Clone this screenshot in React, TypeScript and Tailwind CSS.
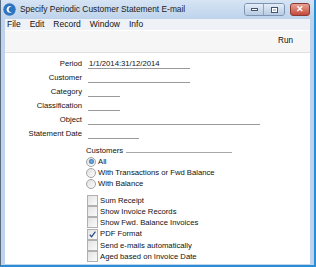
import React from "react";

const fields = [
  { label: "Period", width: "w-[102px]", value: "1/1/2014:31/12/2014" },
  { label: "Customer", width: "w-[102px]", value: "" },
  { label: "Category", width: "w-[32px]", value: "" },
  { label: "Classification", width: "w-[32px]", value: "" },
  { label: "Object", width: "w-[172px]", value: "" },
  { label: "Statement Date", width: "w-[51px] ml-[2px]", value: "" },
];

const radios = [
  { label: "All", checked: true },
  { label: "With Transactions or Fwd Balance", checked: false },
  { label: "With Balance", checked: false },
];

const checks = [
  { label: "Sum Receipt", checked: false },
  { label: "Show Invoice Records", checked: false },
  { label: "Show Fwd. Balance Invoices", checked: false },
  { label: "PDF Format", checked: true },
  { label: "Send e-mails automatically", checked: false },
  { label: "Aged based on Invoice Date", checked: false },
];

const AppIcon = () => (
  <svg width="13" height="13" viewBox="0 0 13 13">
    <circle cx="6.5" cy="6.5" r="6.2" fill="#2f74c0" />
    <path
      d="M8.8 3.2 C6.5 2.2 3.6 3.6 3.6 6.4 C3.6 9 6.4 10.4 8.9 9.3 C7 9.4 5.4 8.2 5.6 6.3 C5.8 4.6 7.2 3.5 8.8 3.2 Z"
      fill="#ffffff"
    />
  </svg>
);

const Radio = ({ checked }: { checked: boolean }) => (
  <div className="w-[10px] h-[10px] rounded-full border border-[#a3a5a7] bg-linear-to-br from-[#e0e0e0] to-[#fcfcfc] flex items-center justify-center">
    {checked && (
      <div className="w-[5px] h-[5px] rounded-full bg-radial from-[#7ab8ec] to-[#1f5f9f]" />
    )}
  </div>
);

const Check = ({ checked }: { checked: boolean }) => (
  <div className="w-[11px] h-[11px] border border-[#b0b0b0] bg-linear-to-br from-[#e3e3e3] to-[#fbfbfb] flex items-center justify-center">
    {checked && (
      <svg width="9" height="9" viewBox="0 0 9 9">
        <path d="M1.8 4.8 L3.6 6.8 L7.4 1.6" stroke="#2a4c86" strokeWidth="1.3" fill="none" />
      </svg>
    )}
  </div>
);

export default function App() {
  return (
    <div className="w-[316px] h-[267px] flex flex-col bg-[#bfd4ec] border-l border-l-[#5b6c80] border-r-2 border-r-[#2b8dd3] border-b-2 border-b-[#2b8dd3] font-['Liberation_Sans',Arial,sans-serif] text-[#111] overflow-hidden">
      {/* title bar */}
      <div className="h-[19px] flex items-center pl-[2px] pr-[4px] bg-linear-to-b from-[#d6e4f4] to-[#bed3eb]">
        <AppIcon />
        <span className="ml-[4px] text-[8.4px] text-[#1b1b1b]">Specify Periodic Customer Statement E-mail</span>
        <div className="ml-auto flex items-center">
          <div className="flex h-[13px] rounded-[3px] border border-[#7d95b3] overflow-hidden">
            <div className="w-[19px] flex items-center justify-center bg-linear-to-b from-[#e4edf7] to-[#b7cbe3] border-r border-[#8ea4bf]">
              <div className="w-[7px] h-[3px] bg-white border border-[#44546a]" />
            </div>
            <div className="w-[20px] flex items-center justify-center bg-linear-to-b from-[#e4edf7] to-[#b7cbe3]">
              <div className="w-[7px] h-[6px] bg-white border border-[#44546a] flex items-center justify-center">
                <div className="w-[3px] h-[2px] bg-[#b7cbe3]" />
              </div>
            </div>
          </div>
          <div className="ml-[5px] w-[20px] h-[13px] rounded-[3px] border border-[#8a3a32] bg-linear-to-b from-[#e6a394] to-[#c4463a] flex items-center justify-center text-white text-[9px] font-bold leading-none">
            ✕
          </div>
        </div>
      </div>

      <div className="flex-1 flex flex-col ml-[4px] mr-[4px] mb-[1px]">
        {/* menu bar */}
        <div className="h-[11px] flex items-center gap-[9px] pl-[2px] bg-[#eef1f6] text-[8.5px]">
          <span>File</span>
          <span>Edit</span>
          <span>Record</span>
          <span>Window</span>
          <span>Info</span>
        </div>

        {/* toolbar */}
        <div className="h-[23px] flex items-center justify-end pr-[17px] bg-[#f6f6f6] border-t border-t-white border-b border-b-[#e0e0e0] text-[8.2px]">
          <span>Run</span>
        </div>

        {/* content */}
        <div className="flex-1 bg-white pt-[4px] text-[7.7px]">
          {fields.map((f) => (
            <div key={f.label} className="h-[14px] flex items-center">
              <div className="w-[77px] text-right">{f.label}</div>
              <div className={`ml-[6px] h-[10px] border-b border-[#9a9a9a] ${f.width} pl-[1px] leading-[10px]`}>
                {f.value}
              </div>
            </div>
          ))}

          <div className="ml-[81px] mt-[4px]">
            <div className="h-[11px] flex items-center">
              <span className="w-[40px]">Customers</span>
              <div className="w-[106px] h-px bg-[#a8a8a8] mt-[3px]" />
            </div>
            {radios.map((r) => (
              <div key={r.label} className="h-[11px] flex items-center gap-[2px]">
                <Radio checked={r.checked} />
                <span>{r.label}</span>
              </div>
            ))}

            <div className="mt-[6px] ml-[1px]">
              {checks.map((c) => (
                <div key={c.label} className="h-[11.2px] flex items-center gap-[2px]">
                  <Check checked={c.checked} />
                  <span>{c.label}</span>
                </div>
              ))}
            </div>
          </div>
        </div>
      </div>
    </div>
  );
}
